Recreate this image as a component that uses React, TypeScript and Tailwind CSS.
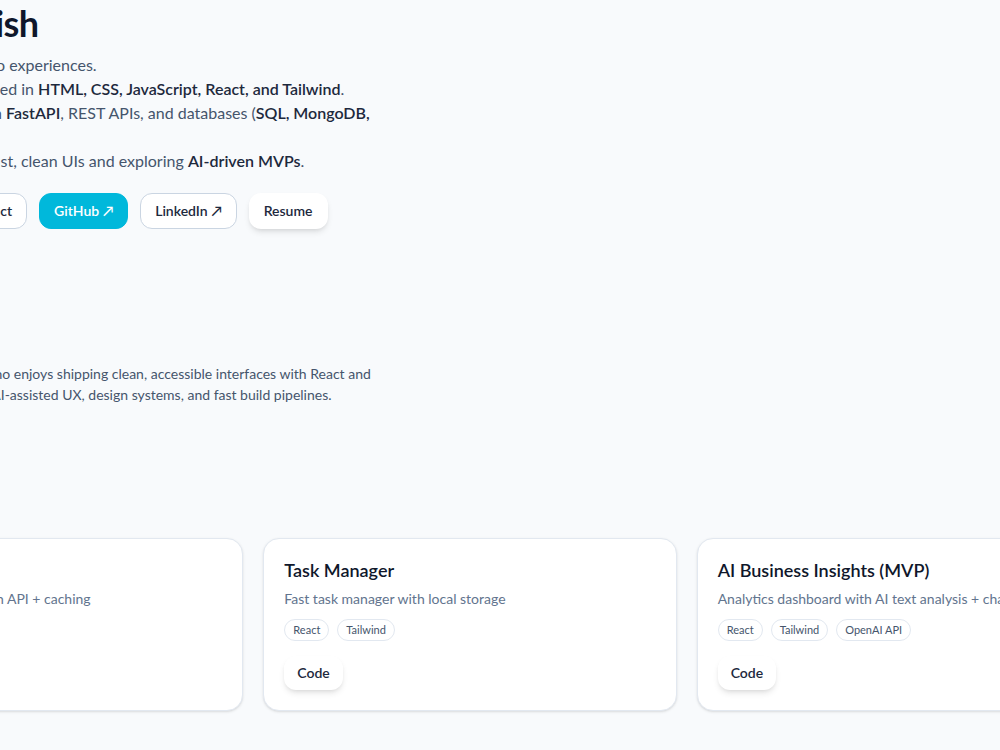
const projects = [
  {
    title: "Weather App",
    desc: "Weather app using Open API + caching",
    tags: ["React", "API"],
    live: true,
  },
  {
    title: "Task Manager",
    desc: "Fast task manager with local storage",
    tags: ["React", "Tailwind"],
    live: false,
  },
  {
    title: "AI Business Insights (MVP)",
    desc: "Analytics dashboard with AI text analysis + charts",
    tags: ["React", "Tailwind", "OpenAI API"],
    live: false,
  },
];

const ProjectCard = ({ p }: { p: (typeof projects)[number] }) => {
  return (
    <div className="rounded-2xl border border-slate-200 bg-white px-5 pt-[17px] pb-5 shadow-sm">
      <h3 className="text-lg font-semibold leading-7 text-slate-900">{p.title}</h3>
      <p className="mt-[5px] whitespace-nowrap text-sm leading-5 text-slate-500">{p.desc}</p>
      <div className="mt-2.5 flex gap-2">
        {p.tags.map((t) => (
          <span
            key={t}
            className="rounded-full border border-slate-200 px-2 py-0.5 text-[11px] leading-4 text-slate-600"
          >
            {t}
          </span>
        ))}
      </div>
      <div className="mt-[15px] flex gap-2">
        {p.live && (
          <button className="rounded-xl bg-white px-[13px] py-[7px] text-sm font-semibold leading-5 text-slate-800 shadow-md">
            Live
          </button>
        )}
        <button className="rounded-xl bg-white px-[13px] py-[7px] text-sm font-semibold leading-5 text-slate-800 shadow-md">
          Code
        </button>
      </div>
    </div>
  );
};

export default function App() {
  return (
    <div className="min-h-screen w-full overflow-hidden bg-slate-50 font-['Lato',sans-serif]">
      <div className="ml-[-170px] w-[1280px] pt-[3px]">
        {/* hero */}
        <section>
          <h1 className="whitespace-nowrap text-4xl font-bold leading-10 tracking-[-0.015em] text-slate-900">
            Hi, I'm Ashish
          </h1>
          <p className="mt-2.5 whitespace-nowrap text-base leading-6 text-slate-600">
            I bring product ideas into experiences.
            <br />
            Frontend dev: experienced in{" "}
            <b className="font-semibold text-slate-800">HTML, CSS, JavaScript, React, and Tailwind</b>.
            <br />
            Backend: solid in Python <b className="font-semibold text-slate-800">FastAPI</b>, REST APIs,
            and databases (<b className="font-semibold text-slate-800">SQL, MongoDB,</b>
            <br />
            <b className="font-semibold text-slate-800">PostgreSQL</b>).
            <br />
            Focused on delivering fast, clean UIs and exploring{" "}
            <b className="font-semibold text-slate-800">AI-driven MVPs</b>.
          </p>
          <div className="mt-5 flex gap-3">
            <button className="rounded-xl border border-slate-300 bg-white px-3.5 py-[7px] text-sm font-semibold leading-5 text-slate-800">
              See Projects
            </button>
            <button className="rounded-xl border border-slate-300 bg-white px-3.5 py-[7px] text-sm font-semibold leading-5 text-slate-800">
              Contact
            </button>
            <button className="rounded-xl border border-cyan-500 bg-cyan-500 px-3.5 py-[7px] text-sm font-semibold leading-5 text-white">
              GitHub ↗
            </button>
            <button className="rounded-xl border border-slate-300 bg-white px-3.5 py-[7px] text-sm font-semibold leading-5 text-slate-800">
              LinkedIn ↗
            </button>
            <button className="rounded-xl border border-transparent bg-white px-3.5 py-[7px] text-sm font-semibold leading-5 text-slate-800 shadow-md">
              Resume
            </button>
          </div>
        </section>

        {/* about */}
        <section className="mt-[88px]">
          <h2 className="text-2xl font-bold leading-8 text-slate-900">About</h2>
          <p className="mt-[14px] whitespace-nowrap text-sm leading-[21px] text-slate-600">
            I'm a frontend developer who enjoys shipping clean, accessible interfaces with React and
            <br />
            Tailwind. Interested in the AI-assisted UX, design systems, and fast build pipelines.
          </p>
        </section>

        {/* projects */}
        <section className="mt-[85px]">
          <h2 className="text-2xl font-bold leading-8 text-slate-900">Projects</h2>
          <div className="mt-4 grid grid-cols-3 gap-5">
            {projects.map((p) => (
              <ProjectCard key={p.title} p={p} />
            ))}
          </div>
        </section>
      </div>
    </div>
  );
}
